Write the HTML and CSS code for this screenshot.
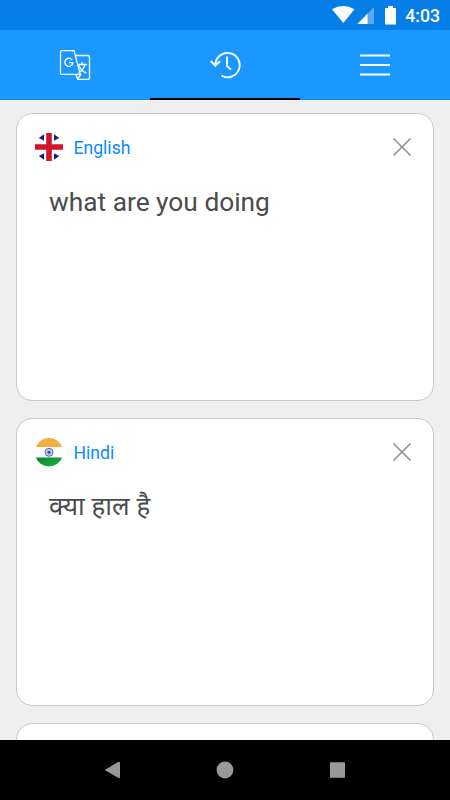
FILE: index.html
```html
<!DOCTYPE html>
<html lang="en">
<head>
<meta charset="utf-8">
<title>Translation history</title>
<link rel="stylesheet" href="styles.css">
</head>
<body>
<div class="screen">
  <header class="status">
    <svg class="status-icons" width="78" height="30" viewBox="332 0 78 30">
      <path fill="#fff" d="M332 9.300Q343 2.500 354.500 9.300L343.300 23Z"/>
      <path fill="#5eaaf1" d="M374 7V24H357.500Z"/>
      <path fill="#fff" d="M367.500 13.500V24H357.500Z"/>
      <path fill="#fff" d="M388 6h5v2h3v16.500h-11V8h3Z"/>
    </svg>
    <span class="clock">4:03</span>
  </header>
  <nav class="tabs">
    <a class="tab">
      <svg width="32" height="32" viewBox="59 49 32 32" fill="none" stroke="#fff" stroke-width="1.300" stroke-linejoin="round" stroke-linecap="round">
        <path d="M62 50.600H74L80.300 74.400H62Q60.500 74.400 60.500 73V52Q60.500 50.600 62 50.600Z"/>
        <path d="M75.600 55.500H88Q89.500 55.500 89.500 57V78Q89.500 79.400 88 79.400H78L75.600 74.400M77.500 79.200L81 74.400"/>
        <path d="M71.800 59.600A4 4 0 1 0 72.800 62.600H69.500"/>
        <path d="M78 64.500H86.500M82 62.500V64.500M85 64.500Q83.500 69.500 79 72.500M79 66Q81.500 71 86 73"/>
      </svg>
    </a>
    <a class="tab active">
      <svg width="32" height="32" viewBox="209 49 32 32" fill="none" stroke="#fff" stroke-width="1.900">
        <path d="M215.300 65A12.200 12.200 0 1 1 221.500 75.700"/>
        <path d="M210.700 61L215.300 65.600L220.200 61M227 56.500V66L231 69.500"/>
      </svg>
    </a>
    <a class="tab">
      <svg width="32" height="32" viewBox="359 49 32 32" stroke="#fff" stroke-width="2">
        <path d="M360 55.500H390M360 65H390M360 74.500H390"/>
      </svg>
    </a>
  </nav>
  <main class="history">
    <article class="card">
      <div class="card-head">
        <svg class="flag" width="30" height="30" viewBox="0 0 30 30">
          <path fill="#141c82" d="M10 2.300V8.800L4.800 6ZM20 2.300L25.200 6L20 8.800ZM10 27.700V21.200L4.800 24ZM20 27.700L25.200 24L20 21.200Z"/>
          <path fill="#d0142c" d="M12.200 1h5.600v11.200H29v5.600H17.800V29h-5.600V17.800H1v-5.600h11.200Z"/>
        </svg>
        <span class="language">English</span>
        <svg class="close" width="20" height="20" viewBox="0 0 20 20"><path d="M1.500 1.500L18.500 18.500M18.500 1.500L1.500 18.500"/></svg>
      </div>
      <p class="phrase">what are you doing</p>
    </article>
    <article class="card">
      <div class="card-head">
        <svg class="flag" width="30" height="30" viewBox="0 0 30 30">
          <defs>
            <linearGradient id="green" x2="1" y2="1"><stop stop-color="#08852c"/><stop offset="1" stop-color="#18b542"/></linearGradient>
          </defs>
          <path fill="#f3ae43" d="M1.800 10A14.200 14.200 0 0 1 28.200 10Z"/>
          <path fill="url(#green)" d="M1.800 20.500A14.200 14.200 0 0 0 28.200 20.500Z"/>
          <circle cx="15" cy="15.300" r="4" fill="#dde4f2" stroke="#456bac" stroke-width="1"/>
          <path stroke="#6d8bc2" stroke-width=".6" d="M15 11.500v7.600M11.200 15.300h7.600M12.300 12.600l5.400 5.400M17.700 12.600l-5.400 5.400"/>
          <circle cx="15" cy="15.300" r="1.500" fill="#355a9e"/>
        </svg>
        <span class="language">Hindi</span>
        <svg class="close" width="20" height="20" viewBox="0 0 20 20"><path d="M1.500 1.500L18.500 18.500M18.500 1.500L1.500 18.500"/></svg>
      </div>
      <p class="phrase hindi" lang="hi">क्या हाल है</p>
    </article>
    <article class="card"></article>
  </main>
  <footer class="navbar">
    <span><svg width="18" height="18" viewBox="0 0 18 18"><path d="M1.500 8.500L14.500 .8Q16 .5 16 1.500V16Q16 17.500 14.500 17L1.500 9.500Q1 9 1.500 8.500Z"/></svg></span>
    <span><svg width="18" height="18" viewBox="0 0 18 18"><circle cx="9" cy="9" r="8.400"/></svg></span>
    <span><svg width="18" height="18" viewBox="0 0 18 18"><rect x="1" y="1.200" width="15" height="15.600" rx=".5"/></svg></span>
  </footer>
</div>
</body>
</html>
```
FILE: styles.css
```css
* {
  box-sizing: border-box;
}

body {
  margin: 0;
  font-family: Roboto, "Noto Sans", sans-serif;
}

svg {
  display: block;
}

.screen {
  display: flex;
  flex-direction: column;
  width: 450px;
  height: 800px;
  overflow: hidden;
  background: #efefef;
}

.status {
  display: flex;
  flex: none;
  justify-content: flex-end;
  height: 30px;
  padding-right: 10px;
  background: #067ee7;
}

.clock {
  width: 35px;
  margin-left: -5px;
  color: #fff;
  font-size: 17.700px;
  font-weight: 500;
  line-height: 32px;
  text-align: right;
  white-space: nowrap;
}

.status-icons {
  flex: none;
}

.tabs {
  display: grid;
  flex: none;
  grid-template-columns: repeat(3, 1fr);
  height: 70px;
  background: #1a98ff;
  border-bottom: 1px solid #1388ee;
}

.tab {
  display: flex;
  justify-content: center;
  height: 70px;
  padding-top: 19px;
}

.tab.active {
  border-bottom: 2px solid #000;
}

.history {
  display: flex;
  flex: 1;
  flex-direction: column;
  gap: 17px;
  min-height: 0;
  padding: 13px 16px 0;
  overflow: hidden;
}

.card {
  flex: none;
  height: 288px;
  padding: 18px 21px 0 17px;
  background: #fff;
  border: 1px solid #c9c9c9;
  border-radius: 16px;
}

.card-head {
  display: flex;
  align-items: center;
  height: 30px;
}

.language {
  flex: 1;
  margin-left: 9.500px;
  padding-top: 2px;
  color: #078bff;
  font-size: 17.600px;
  line-height: 28px;
}

.close {
  fill: none;
  stroke: #909090;
  stroke-width: 1.600;
}

.phrase {
  margin: 23px 0 0 15px;
  color: #4b4b4b;
  font-size: 26.300px;
  line-height: 34px;
}

.hindi {
  padding-top: 2px;
  font-family: "Noto Sans Devanagari", Roboto, sans-serif;
  font-size: 26px;
}

.navbar {
  display: grid;
  flex: none;
  grid-template-columns: repeat(3, 112.500px);
  justify-content: center;
  align-items: center;
  height: 60px;
  background: #000;
}

.navbar svg {
  margin: 0 auto;
  fill: #999;
}
```
